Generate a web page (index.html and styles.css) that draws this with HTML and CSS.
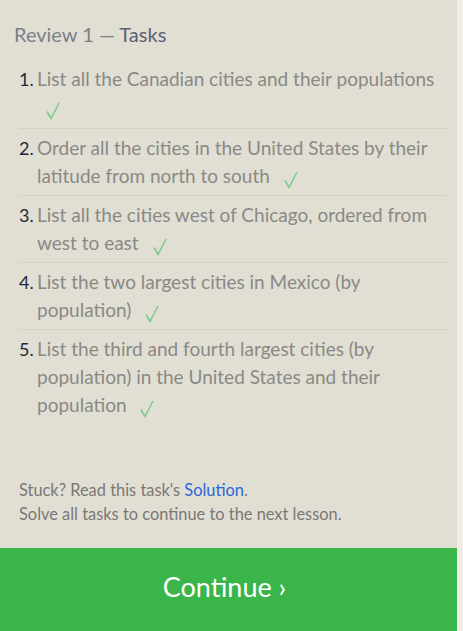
FILE: index.html
```html
<!DOCTYPE html>
<html>
<head>
<meta charset="utf-8">
<link rel="stylesheet" href="styles.css">
</head>
<body>
<div class="page">
  <div class="panel">
    <div class="content">
      <h2 class="title">Review 1 — <span class="strong">Tasks</span></h2>
      <ol class="tasks">
        <li class="task"><span class="num">1.</span><span class="text">List all the Canadian cities and their populations <svg class="check" width="14" height="18" viewBox="0 0 14 18"><path d="M1 9.5 L5 16.5 L13 1" fill="none" stroke="#7dcb8a" stroke-width="1.6"/></svg></span></li>
        <li class="task"><span class="num">2.</span><span class="text">Order all the cities in the United States by their latitude from north to south <svg class="check" width="14" height="18" viewBox="0 0 14 18"><path d="M1 9.5 L5 16.5 L13 1" fill="none" stroke="#7dcb8a" stroke-width="1.6"/></svg></span></li>
        <li class="task"><span class="num">3.</span><span class="text">List all the cities west of Chicago, ordered from west to east <svg class="check" width="14" height="18" viewBox="0 0 14 18"><path d="M1 9.5 L5 16.5 L13 1" fill="none" stroke="#7dcb8a" stroke-width="1.6"/></svg></span></li>
        <li class="task"><span class="num">4.</span><span class="text">List the two largest cities in Mexico (by population) <svg class="check" width="14" height="18" viewBox="0 0 14 18"><path d="M1 9.5 L5 16.5 L13 1" fill="none" stroke="#7dcb8a" stroke-width="1.6"/></svg></span></li>
        <li class="task"><span class="num">5.</span><span class="text">List the third and fourth largest cities (by population) in the United States and their population <svg class="check" width="14" height="18" viewBox="0 0 14 18"><path d="M1 9.5 L5 16.5 L13 1" fill="none" stroke="#7dcb8a" stroke-width="1.6"/></svg></span></li>
      </ol>
      <div class="footer-note">
        <p>Stuck? Read this task's <a class="link" href="#">Solution</a>.</p>
        <p>Solve all tasks to continue to the next lesson.</p>
      </div>
    </div>
    <a class="continue" href="#">Continue ›</a>
  </div>
  <div class="strip"></div>
</div>
</body>
</html>
```
FILE: styles.css
```css
html, body {
  margin: 0;
  padding: 0;
  height: 100%;
}
body {
  font-family: Lato, "Noto Sans", sans-serif;
  background: #efede6;
}
.page {
  display: flex;
  height: 631px;
}
.panel {
  width: 457px;
  background: #e1dfd4;
  display: flex;
  flex-direction: column;
}
.strip {
  flex: 1;
  background: #efede6;
}
.content {
  flex: 1;
  display: flex;
  flex-direction: column;
}
.title {
  margin: 21px 0 0 14px;
  font-size: 20px;
  font-weight: normal;
  color: #7a7f88;
  line-height: 26px;
}
.title .strong {
  color: #5a6170;
}
.tasks {
  list-style: none;
  margin: 13px 10px 0 19px;
  padding: 0;
}
.task {
  display: flex;
  font-size: 19px;
  line-height: 28px;
  padding: 5px 0 5px;
}
.task:first-child {
  padding-bottom: 7px;
}
.task + .task {
  border-top: 1px solid #d4d2c7;
}
.num {
  width: 18px;
  color: #1f2a38;
  flex: none;
  font-size: 18px;
}
.text {
  color: #8a8985;
  padding-right: 8px;
}
.check {
  margin-left: 9px;
  vertical-align: -6px;
}
.footer-note {
  margin: auto 0 0 19px;
  padding-bottom: 22px;
  font-size: 16.4px;
  line-height: 24px;
  color: #7b7774;
}
.footer-note p {
  margin: 0;
}
.link {
  color: #2a66dc;
  text-decoration: none;
}
.continue {
  height: 83px;
  box-sizing: border-box;
  padding: 0 8px 6px 0;
  background: #3ab54a;
  color: #fff;
  font-size: 27px;
  display: flex;
  align-items: center;
  justify-content: center;
  text-decoration: none;
}
```
